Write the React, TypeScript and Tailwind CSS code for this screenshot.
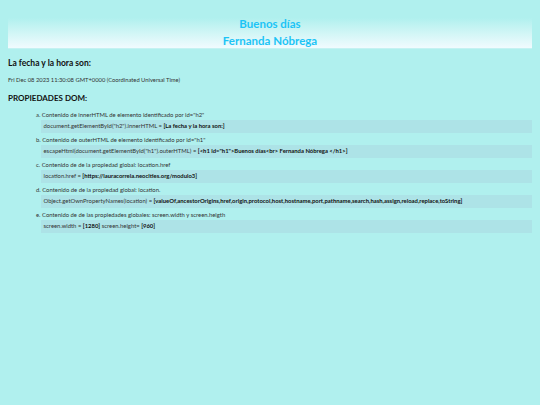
const items = [
  {
    label: 'Contenido de innerHTML de elemento identificado por id="h2"',
    code: 'document.getElementById("h2").innerHTML = ',
    value: '[La fecha y la hora son:]',
  },
  {
    label: 'Contenido de outerHTML de elemento identificado por id="h1"',
    code: 'escapeHtml(document.getElementById("h1").outerHTML) = ',
    value: '[<h1 id="h1">Buenos días<br> Fernanda Nóbrega </h1>]',
  },
  {
    label: 'Contenido de de la propiedad global: location.href',
    code: 'location.href = ',
    value: '[https://lauracorreia.neocities.org/modulo3]',
  },
  {
    label: 'Contenido de de la propiedad global: location.',
    code: 'Object.getOwnPropertyNames(location) = ',
    value:
      '[valueOf,ancestorOrigins,href,origin,protocol,host,hostname,port,pathname,search,hash,assign,reload,replace,toString]',
  },
]

const letters = ['a.', 'b.', 'c.', 'd.', 'e.']

export default function App() {
  return (
    <div className="min-h-[405px] bg-[#b0f0ee] px-2 pt-[18px] font-['Lato','Noto_Sans',sans-serif] text-[#333]">
      {/* Header */}
      <div className="flex h-[31px] flex-col items-center justify-center border-b border-[#c4f2f2] bg-gradient-to-b from-[#b0f0ee] to-[#f0fbfe] text-[11.5px] leading-[16.5px] font-bold text-[#1cc4f6]">
        <h1 className="-mt-[1px]">Buenos días</h1>
        <h1>Fernanda Nóbrega</h1>
      </div>

      <h2 className="mt-[8px] text-[8.5px] leading-[12px] font-bold text-[#111]">La fecha y la hora son:</h2>
      <p className="mt-[7px] text-[5.8px] leading-[8px]">Fri Dec 08 2023 11:30:08 GMT+0000 (Coordinated Universal Time)</p>
      <h2 className="mt-[8px] text-[8px] leading-[12px] font-bold text-[#111]">PROPIEDADES DOM:</h2>

      <ol className="mt-[3.5px] text-[5.9px]">
        {items.map((item, i) => (
          <li key={item.label} className="flex flex-col">
            <div className="h-[12.5px] pl-[28px] leading-[14px]">
              {letters[i]} {item.label}
            </div>
            <div className="ml-[32.5px] h-[12.5px] bg-[#ade3e7] pl-[3px] leading-[12.5px]">
              {item.code}
              <b className="text-[#111]">{item.value}</b>
            </div>
          </li>
        ))}
        <li className="flex flex-col">
          <div className="h-[12.5px] pl-[28px] leading-[14px]">
            {letters[4]} Contenido de de las propiedades globales: screen.width y screen.heigth
          </div>
          <div className="ml-[32.5px] h-[12.5px] bg-[#ade3e7] pl-[3px] leading-[12.5px]">
            screen.width = <b className="text-[#111]">[1280]</b> screen.height= <b className="text-[#111]">[960]</b>
          </div>
        </li>
      </ol>
    </div>
  )
}
